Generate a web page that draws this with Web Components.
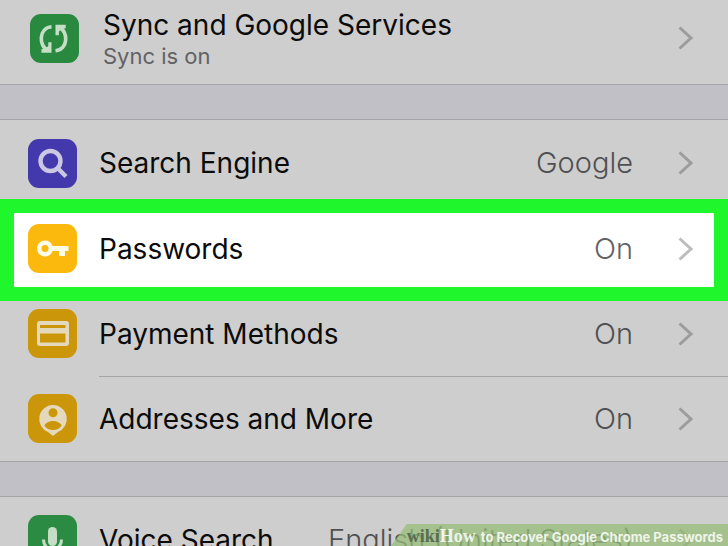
<!DOCTYPE html>
<html lang="en">
<head>
<meta charset="utf-8">
<title>Settings</title>
<style>
html, body { margin: 0; height: 100%; }
body { overflow: hidden; font-family: Inter, "Liberation Sans", sans-serif; background: #c1c0c6; }
</style>
</head>
<body>
<settings-page></settings-page>

<template id="page-t">
<style>
:host { display: block; position: relative; height: 100%; overflow: hidden; }
main { display: flex; flex-direction: column; gap: 34px; }
</style>
<main>
  <settings-group first>
    <settings-row icon="sync" color="#29893f" glyph="#c4dfc6" label="Sync and Google Services" note="Sync is on"></settings-row>
  </settings-group>
  <settings-group>
    <settings-row icon="search" color="#4338ac" glyph="#cac8e2" label="Search Engine" value="Google" tall></settings-row>
    <settings-row icon="key" color="#fcb90d" glyph="#fffbea" label="Passwords" value="On" highlighted></settings-row>
    <settings-row icon="card" color="#cb9609" glyph="#e4d9bd" label="Payment Methods" value="On"></settings-row>
    <settings-row icon="person" color="#cb9609" glyph="#e4d9bd" label="Addresses and More" value="On" divided></settings-row>
  </settings-group>
  <settings-group>
    <settings-row icon="mic" color="#2b8b43" glyph="#c4dfc6" label="Voice Search" value="English (United States)"></settings-row>
  </settings-group>
</main>
<caption-bar><span slot="brand">wiki</span><span slot="how">How</span>to Recover Google Chrome Passwords</caption-bar>
</template>

<template id="group-t">
<style>
:host { display: block; background: #cecece; border-top: 1px solid #a4a4a6; border-bottom: 1px solid #a4a4a6; }
:host([first]) { border-top: 0; }
</style>
<slot></slot>
</template>

<template id="row-t">
<style>
:host { display: block; position: relative; }
:host([highlighted]) { z-index: 1; }
:host([highlighted])::before {
  content: ""; position: absolute; z-index: -1; inset: -7px 0 -10px;
  border: 14px solid #20f62c; background: #fff;
}
button {
  display: flex; align-items: center; box-sizing: border-box; width: 100%; height: 85px;
  margin: 0; padding: 0 35px 0 28px; border: 0; background: none;
  font: inherit; color: #0b0b0b; text-align: left; white-space: nowrap;
}
:host([tall]) button { height: 86px; }
:host([divided])::before { content: ""; display: block; position: absolute; top: 0; left: 99px; right: 0; border-top: 1px solid #a4a4a6; }
.text { flex: 1; display: flex; flex-direction: column; margin-left: 22px; }
.label { font-size: 28px; line-height: 36px; }
.value { font-size: 29px; line-height: 36px; font-weight: 300; color: #505052; }
:host([highlighted]) .value { color: #626264; }
.note { font-size: 22px; line-height: 26px; color: #626264; }
.chevron { width: 15px; height: 24px; margin-left: 45px; fill: none; stroke: #9c9c9c; stroke-width: 3; }
:host([highlighted]) .chevron { stroke: #bdbdbd; }
:host([note]) button { height: 84px; padding-left: 30px; padding-bottom: 8px; }
:host([note]) .text { margin-left: 24px; }
</style>
<button type="button">
  <icon-tile></icon-tile>
  <span class="text"><span class="label"></span></span>
  <span class="value"></span>
  <svg class="chevron" viewBox="0 0 15 24" aria-hidden="true"><path d="M1.5 1.5 13 12 1.5 22.5"/></svg>
</button>
</template>

<template id="tile-t">
<style>
:host { display: block; flex: none; width: 49px; height: 49px; border-radius: 11px; }
svg { display: block; width: 100%; height: 100%; }
</style>
<svg viewBox="0 0 49 49" aria-hidden="true"></svg>
</template>

<template id="caption-t">
<style>
:host {
  display: block; position: absolute; right: 0; bottom: 0; box-sizing: border-box; height: 22px; padding: 0 5px 0 16px;
  background: rgba(150, 189, 120, .74); clip-path: polygon(16px 0, 100% 0, 100% 100%, 0 100%);
  font: 700 13px/24px Inter, "Liberation Sans", sans-serif; color: #eff4ea; white-space: nowrap;
}
.brand, .how { font-family: "Liberation Serif", serif; font-weight: 700; font-size: 18px; }
.brand { color: #5a6c52; }
.how { margin-right: 5px; }
</style>
<span class="brand"><slot name="brand"></slot></span><span class="how"><slot name="how"></slot></span><slot></slot>
</template>

<script>
const ICONS = {
  sync: '<g fill="none" stroke="currentColor" stroke-width="3.6"><path d="M21.500 12.800C8.500 14 8.500 32.500 18 36"/><path d="M25.500 36.800C38.500 35.500 38.500 17 29 13.500"/></g><path fill="currentColor" d="M11.500 38.800V35.300L15.800 34.300 18.300 32V28.300H21.500V38.800zM35.700 10.800V14.300L31.400 15.300 28.900 17.600V21.300H25.500V10.800z"/>',
  search: '<g fill="none" stroke="currentColor" stroke-width="4.4"><circle cx="22.500" cy="22" r="10"/><path d="M29.500 29 38 37.500"/></g>',
  key: '<path fill="currentColor" fill-rule="evenodd" d="M17 16.500a8 8 0 1 0 7.600 10.500H31v5h6v-5h3.500v-5H24.600A8 8 0 0 0 17 16.500zm0 4.500a3.500 3.500 0 1 1 0 7 3.500 3.500 0 0 1 0-7z"/>',
  card: '<path fill="currentColor" fill-rule="evenodd" d="M12 12H38a3 3 0 0 1 3 3V34a3 3 0 0 1-3 3H12a3 3 0 0 1-3-3V15a3 3 0 0 1 3-3zM12 16v3H37.500V16zM12 24.500V33.500H37.500V24.500z"/>',
  person: '<path fill="currentColor" fill-rule="evenodd" d="M25 11a14 14 0 0 1 5 27L25 42 20 38a14 14 0 0 1 5-27zM25 14.200a4.500 4.500 0 1 0 0 9 4.500 4.500 0 0 0 0-9zM16.300 31.500c4 6 13.400 6 17.400 0-3-6-14.400-6-17.400 0z"/>',
  mic: '<rect x="20" y="12" width="9" height="19" rx="4.500" fill="currentColor"/><path d="M15.500 24.500c0 13 18 13 18 0M24.500 34v6" fill="none" stroke="currentColor" stroke-width="3"/>'
};
function stamp(el, id) {
  const root = el.attachShadow({ mode: 'open' });
  root.append(document.getElementById(id).content.cloneNode(true));
  return root;
}
customElements.define('icon-tile', class extends HTMLElement {
  constructor() { super(); stamp(this, 'tile-t'); }
  show(icon, color, glyph) {
    this.style.background = color;
    this.style.color = glyph;
    this.shadowRoot.querySelector('svg').innerHTML = ICONS[icon];
  }
});
customElements.define('settings-row', class extends HTMLElement {
  connectedCallback() {
    if (this.shadowRoot) return;
    const root = stamp(this, 'row-t');
    customElements.upgrade(root);
    root.querySelector('.label').textContent = this.getAttribute('label');
    root.querySelector('.value').textContent = this.getAttribute('value') || '';
    if (this.hasAttribute('note')) {
      const note = document.createElement('span');
      note.className = 'note';
      note.textContent = this.getAttribute('note');
      root.querySelector('.text').append(note);
    }
    root.querySelector('icon-tile').show(this.getAttribute('icon'), this.getAttribute('color'), this.getAttribute('glyph'));
  }
});
customElements.define('settings-group', class extends HTMLElement {
  constructor() { super(); stamp(this, 'group-t'); }
});
customElements.define('caption-bar', class extends HTMLElement {
  constructor() { super(); stamp(this, 'caption-t'); }
});
customElements.define('settings-page', class extends HTMLElement {
  constructor() { super(); stamp(this, 'page-t'); }
});
</script>
</body>
</html>
